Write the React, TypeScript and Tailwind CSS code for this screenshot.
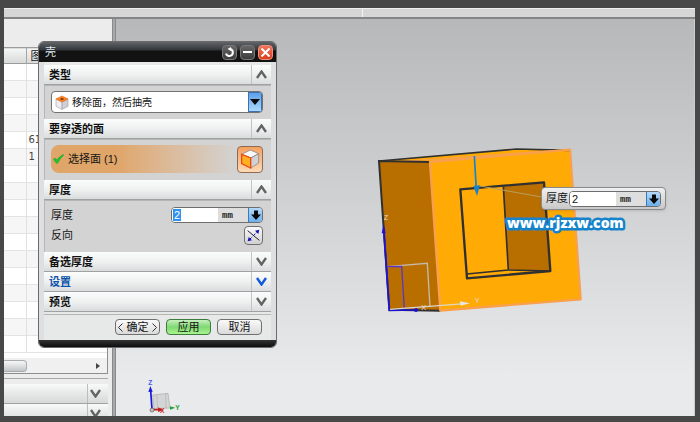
import React, { useState } from 'react';
import clsx from 'clsx';

const fontStack = "font-['Liberation_Sans','Noto_Sans_CJK_SC',sans-serif]";

const rows = ['', '', '', '', '61', '1', '', '', '', '', '', '', '', '', '', '', ''];

const Chevron: React.FC<{ open?: boolean; color?: string }> = ({ open, color = '#646464' }) => (
  <svg width="11" height="9" viewBox="0 0 11 9" fill="none" stroke={color} strokeWidth="2.4">
    {open ? <path d="M1 8 L5.5 1.5 L10 8" /> : <path d="M1 1 L5.5 7.5 L10 1" />}
  </svg>
);

const DownArrow = () => (
  <svg width="10" height="10" viewBox="0 0 10 10" fill="#0a0a0a">
    <path d="M3 0.5H7V4.5H10L5 10L0 4.5H3Z" />
  </svg>
);

interface SectionProps {
  title: string;
  defaultOpen?: boolean;
  highlight?: boolean;
  children?: React.ReactNode;
}

const Section: React.FC<SectionProps> = ({ title, defaultOpen = false, highlight = false, children }) => {
  const [open, setOpen] = useState(defaultOpen);

  return (
    <section>
      <button
        type="button"
        aria-expanded={open}
        onClick={() => setOpen(!open)}
        className="flex h-5 w-full items-stretch justify-between border-b border-[#a0a2a2] bg-linear-to-b from-[#fbfcfc] via-[#eff1f1] to-[#dadddd] text-left"
      >
        <span
          className={clsx(
            'pl-[5px] text-[11px] leading-5 font-bold',
            highlight ? 'text-[#0c52a8]' : 'text-[#111111]'
          )}
        >
          {title}
        </span>
        <span className="flex w-5 items-center justify-center border-l border-[#c2c4c4]">
          <Chevron open={open} color={highlight ? '#1259e0' : undefined} />
        </span>
      </button>
      {open && children && (
        <div className="border-t border-l border-[#b6b6b6] bg-[#d3d3d3]">{children}</div>
      )}
    </section>
  );
};

interface ThicknessFieldProps {
  id: string;
  value: string;
  onChange: (value: string) => void;
  selected?: boolean;
}

const ThicknessField: React.FC<ThicknessFieldProps> = ({ id, value, onChange, selected }) => (
  <div className="flex h-4 w-[92px] items-stretch overflow-hidden rounded-sm border border-[#6e6e6e] bg-[#dedede]">
    <div className="flex w-[46px] items-center bg-white pl-px">
      <input
        id={id}
        value={value}
        onChange={(e) => onChange(e.target.value)}
        className={clsx(
          'h-3 p-0 text-[11px] leading-3 outline-none',
          selected ? 'w-2 bg-[#2f93ee] pl-px text-white' : 'w-9 pl-px text-[#111111]'
        )}
      />
    </div>
    <span className="flex-1 pl-1 font-['Liberation_Mono',monospace] text-[9px] leading-4 font-bold text-[#222222]">
      mm
    </span>
    <button
      type="button"
      aria-label="选项"
      className="flex w-[14px] items-center justify-center border-l border-[#3f78b8] bg-linear-to-b from-[#b5d8f8] to-[#6bb0ee]"
    >
      <DownArrow />
    </button>
  </div>
);

const ModelTree = () => (
  <aside className="flex w-[108px] shrink-0 flex-col bg-[#ececec]">
    <div className="h-7 shrink-0" />
    <div className="mr-1 min-h-0 flex-1 overflow-hidden border-r border-[#8e8e8e] bg-white">
      <table className="w-full table-fixed border-collapse text-[10px] leading-4 text-[#444444]">
        <thead>
          <tr className="h-4 border-y border-[#9b9b9b] bg-linear-to-b from-[#f4f5f5] to-[#d9dbdb]">
            <th className="w-[22px] border-r border-[#a4a4a4] p-0" />
            <th className="p-0 pl-1 text-left text-[11px] leading-[14px] font-normal text-[#111111]">图</th>
          </tr>
        </thead>
        <tbody>
          {rows.map((value, i) => (
            <tr key={i} className="h-[17px] border-b border-[#e4e4e4] even:bg-[#f6f6f6]">
              <td className="border-r border-[#e0e0e0] p-0" />
              <td className="p-0 pl-[2px] font-['DejaVu_Sans',sans-serif]">{value}</td>
            </tr>
          ))}
        </tbody>
      </table>
    </div>
    <div className="mr-1 flex h-4 shrink-0 items-center justify-between border-r border-b border-[#8e8e8e] bg-[#f0f0f0]">
      <div className="h-3 w-[23px] rounded-r-sm border border-l-0 border-[#a9abad] bg-linear-to-b from-[#f6f7f8] to-[#c3c6c9]" />
      <svg width="4" height="6" viewBox="0 0 4 6" className="mr-[7px]" fill="#444444">
        <path d="M0 0 L4 3 L0 6Z" />
      </svg>
    </div>
    <div className="mr-1 mt-1 mb-[5px] h-px shrink-0 bg-[#a9a9a9]" />
    <div className="mr-1 h-8 shrink-0 overflow-hidden">
      {['依附性', '细节'].map((name) => (
        <button
          key={name}
          type="button"
          aria-label={name}
          className="flex h-5 w-full items-stretch justify-end border-b border-[#a0a2a2] bg-linear-to-b from-[#f8f9f9] to-[#d6d9d9] pr-px"
        >
          <span className="flex w-5 items-center justify-center border-l border-[#bcbebe] pr-1">
            <Chevron />
          </span>
        </button>
      ))}
    </div>
  </aside>
);

const SolidModel = () => (
  <svg width="220" height="180" viewBox="0 0 660 540" className="absolute top-[121px] left-[254px]">
    {/* outer faces */}
    <path d="M27 63 L440 27 L600 29 L180 66Z" fill="#ffaa05" />
    <path d="M27 63 L180 66 L211 512 L58 509Z" fill="#b96e00" />
    <path d="M180 66 L600 29 L632 478 L211 512Z" fill="#ffaa05" />
    <path d="M27 63 L440 27 L600 31" fill="none" stroke="#303030" strokeWidth="5" />
    <path d="M100 64 L600 29" stroke="#f7a04e" strokeWidth="4" />
    <path d="M180 66 L27 63 L58 509 L211 512" fill="none" stroke="#303030" strokeWidth="6" />
    <path d="M180 66 L600 29 L632 478 L211 512Z" fill="none" stroke="#f9a04e" strokeWidth="7" strokeLinejoin="round" />

    {/* pocket */}
    <path d="M400 139 L522 128 L541 393 L415 390Z" fill="#b96e00" />
    <path d="M400 139 L415 390 L541 393 M415 390 L291 402" fill="none" stroke="#303030" strokeWidth="5" />
    <path d="M271 148 L522 127 L541 393 L291 415Z" fill="none" stroke="#303030" strokeWidth="7" strokeLinejoin="round" />

    {/* direction handle */}
    <path d="M330 138 L520 172" stroke="#b8a060" strokeWidth="3" />
    <path d="M313 48 L319 150" stroke="#1484d0" strokeWidth="5" />
    <path d="M310 138 L330 136 L321 168Z" fill="#1484d0" />

    {/* datum frame */}
    <path d="M52 380 L172 370 L180 500" fill="none" stroke="#c5b9a8" strokeWidth="4" />
    <path d="M58 509 L41 265 M52 380 L95 379 L103 508" fill="none" stroke="#5a35c8" strokeWidth="4" />
    <path d="M41 265 L58 511 L138 510" fill="none" stroke="#1b12cf" strokeWidth="5" />
    <path d="M35 280 L41 252 L47 280Z" fill="#1b12cf" />
    <circle cx="138" cy="510" r="6" fill="#1b12cf" />
    <path d="M60 508 L285 491" stroke="#ddd6cc" strokeWidth="4" />
    <path d="M270 484 L300 490 L272 497Z" fill="#e6e6e6" />
    <g className="font-['Liberation_Sans',sans-serif] text-[22px]" fill="#dedede">
      <text x="41" y="239">Z</text>
      <text x="154" y="509">X</text>
      <text x="314" y="488">Y</text>
    </g>
  </svg>
);

const ViewTriad = () => (
  <svg width="40" height="40" viewBox="0 0 120 120" className="absolute bottom-0 left-[24px]">
    <path d="M38 57 L84 52 L90 96 L42 98Z" fill="#d4d5d5" stroke="#aaaaaa" strokeWidth="2" />
    <path d="M50 56 L53 97 M77 53 L78 96" stroke="#b2b2b2" strokeWidth="2" />
    <path d="M36 100 L32 44" stroke="#1717e0" strokeWidth="5" />
    <path d="M25 48 L31 30 L38 47Z" fill="#1717e0" />
    <path d="M36 101 L60 101" stroke="#c51d1d" strokeWidth="5" />
    <path d="M54 94 L70 102 L54 108Z" fill="#c51d1d" />
    <path d="M90 91 L106 95 L90 101Z" fill="#21a038" />
    <circle cx="36" cy="102" r="6" fill="#c4c4c4" stroke="#555555" strokeWidth="2" />
    <g className="font-['Liberation_Sans',sans-serif] text-[20px] font-bold">
      <text x="25" y="28" fill="#4257ee">Z</text>
      <text x="60" y="112" fill="#cf2828">X</text>
      <text x="106" y="102" fill="#21a038">Y</text>
    </g>
  </svg>
);

const ShellDialog: React.FC<{ value: string; onChange: (value: string) => void }> = ({ value, onChange }) => (
  <div
    role="dialog"
    aria-label="壳"
    className="absolute top-[33px] left-[34px] w-[239px] overflow-hidden rounded-md border border-[#6b6b6b] bg-[#e7e8e8] text-[11px] text-[#151515]"
  >
    <header className="flex h-5 items-center justify-between bg-linear-to-b from-[#626568] from-0% via-[#33363a] via-40% to-[#121212] to-45% pr-[3px] pl-[6px]">
      <h1 className="text-[11px] leading-5 text-[#dce6ee]">壳</h1>
      <div className="flex gap-[3px]">
        <button type="button" aria-label="重置" className="flex size-[15px] items-center justify-center rounded-sm border border-[#777777] bg-linear-to-b from-[#666666] to-[#3d3d3d]">
          <svg width="11" height="11" viewBox="0 0 11 11" fill="none" stroke="#ffffff" strokeWidth="2">
            <path d="M6 2 A3.5 3.5 0 1 1 2 6.5" />
            <path d="M7 0 L3.5 2 L7 4Z" fill="#ffffff" stroke="none" />
          </svg>
        </button>
        <button type="button" aria-label="最小化" className="flex size-[15px] items-center justify-center rounded-sm border border-[#777777] bg-linear-to-b from-[#666666] to-[#3d3d3d]">
          <span className="h-[2px] w-[9px] bg-white" />
        </button>
        <button type="button" aria-label="关闭" className="flex size-[15px] items-center justify-center rounded-sm border border-[#f08e78] bg-linear-to-b from-[#f0755d] to-[#d93a1c]">
          <svg width="9" height="9" viewBox="0 0 9 9" stroke="#ffffff" strokeWidth="2">
            <path d="M0.5 0.5 L8.5 8.5 M8.5 0.5 L0.5 8.5" />
          </svg>
        </button>
      </div>
    </header>

    <div className="border-x-[5px] border-[#dedfe0] pt-[3px]">
      <Section title="类型" defaultOpen>
        <div className="pt-[5px] pr-2 pb-[6px] pl-[6px]">
          <div className="relative flex h-[22px] items-stretch overflow-hidden rounded-sm border border-[#727272] bg-white">
            <svg width="14" height="15" viewBox="0 0 42 45" className="ml-[3px] shrink-0 self-center">
              <path d="M3 12 L21 21 V43 L3 34Z" fill="#eeeef2" stroke="#a8a8b0" strokeWidth="2" />
              <path d="M39 12 L21 21 V43 L39 34Z" fill="#cfcfd8" stroke="#a0a0a8" strokeWidth="2" />
              <path d="M3 12 L21 3 L39 12 L21 21Z" fill="#f98a28" stroke="#ee6614" strokeWidth="2" />
              <path d="M14 12 L21 8 L28 12 L21 16Z" fill="#8a3b0c" />
            </svg>
            <select aria-label="类型" className="min-w-0 flex-1 appearance-none bg-transparent pl-[3px] text-[10px] outline-none">
              <option>移除面，然后抽壳</option>
              <option>对所有面抽壳</option>
            </select>
            <span className="pointer-events-none flex w-[14px] items-center justify-center border border-[#3f70b4] bg-linear-to-b from-[#5c9fea] via-[#86bcf0] to-[#a9dafb]">
              <svg width="10" height="7" viewBox="0 0 10 7" fill="#0a0a0a">
                <path d="M0 0H10L5 6Z" />
              </svg>
            </span>
          </div>
        </div>
      </Section>

      <Section title="要穿透的面" defaultOpen>
        <div className="flex items-center justify-between pt-[5px] pr-2 pb-[7px] pl-[6px]">
          <div className="flex h-7 flex-1 items-center rounded-lg bg-linear-to-r from-[#e0a568] from-35% to-[#d3d3d3] pl-[2px]">
            <svg width="11" height="10" viewBox="0 0 33 30" fill="#1fc52e" stroke="#138a20" strokeWidth="1">
              <path d="M1 16 L7 12 L12 18 Q20 6 31 1 L32 4 Q21 14 14 28 L10 28Z" />
            </svg>
            <span className="pl-1 text-[11px] leading-4">选择面 (1)</span>
          </div>
          <button
            type="button"
            aria-label="选择面"
            className="flex h-[27px] w-[26px] items-center justify-center rounded-sm border border-[#8e6b55] bg-linear-to-b from-[#f5a15f] to-[#fcd9b5]"
          >
            <svg width="20" height="20" viewBox="0 0 60 60">
              <path d="M5 16 L31 3 L56 14 L32 27Z" fill="#fafafa" stroke="#777777" strokeWidth="2" />
              <path d="M56 14 L32 27 V57 L56 42Z" fill="#d2d2d6" stroke="#777777" strokeWidth="2" />
              <path d="M5 16 L32 27 V57 L5 44Z" fill="#ffb020" stroke="#ee4a10" strokeWidth="4" />
            </svg>
          </button>
        </div>
      </Section>

      <Section title="厚度" defaultOpen>
        <div className="pt-1 pr-2 pb-[7px] pl-[6px]">
          <div className="flex h-5 items-center justify-between">
            <label htmlFor="shell-thickness">厚度</label>
            <ThicknessField id="shell-thickness" value={value} onChange={onChange} selected />
          </div>
          <div className="flex h-5 items-center justify-between">
            <label htmlFor="shell-reverse">反向</label>
            <button
              id="shell-reverse"
              type="button"
              className="flex size-[19px] items-center justify-center rounded-sm border border-[#707070] bg-linear-to-b from-[#fafafa] to-[#d0d0d0]"
            >
              <svg width="13" height="13" viewBox="0 0 39 39">
                <path d="M2 5 L37 34" stroke="#222222" strokeWidth="3" />
                <path d="M6 33 L33 6" stroke="#1414b8" strokeWidth="3" strokeDasharray="11 5" />
                <path d="M37 2 L34 15 L24 5Z M2 37 L5 24 L15 34Z" fill="#1414b8" />
              </svg>
            </button>
          </div>
        </div>
      </Section>

      <Section title="备选厚度" />
      <Section title="设置" highlight />
      <Section title="预览" />

      <div className="mt-[2px] flex justify-end gap-[6px] border-t border-[#b5b5b5] px-[9px] pt-1 pb-[5px]">
        <button type="button" className="flex h-4 w-[45px] items-center justify-between rounded-sm border border-[#707070] bg-linear-to-b from-[#fafafa] to-[#dadada] px-[2px] leading-[14px]">
          <svg width="5" height="9" viewBox="0 0 5 9" fill="none" stroke="#333333">
            <path d="M4.5 0.5 L0.5 4.5 L4.5 8.5" />
          </svg>
          确定
          <svg width="5" height="9" viewBox="0 0 5 9" fill="none" stroke="#333333">
            <path d="M0.5 0.5 L4.5 4.5 L0.5 8.5" />
          </svg>
        </button>
        <button type="button" className="h-4 w-[45px] rounded-sm border border-[#3d7a3d] bg-linear-to-b from-[#c6f0bd] via-[#7fd873] to-[#a9f58f] leading-[14px]">
          应用
        </button>
        <button type="button" className="h-4 w-[45px] rounded-sm border border-[#707070] bg-linear-to-b from-[#fafafa] to-[#dadada] leading-[14px]">
          取消
        </button>
      </div>
    </div>
    <div className="h-[7px] bg-linear-to-b from-[#333333] to-[#0e0e0e]" />
  </div>
);

const App: React.FC = () => {
  const [thickness, setThickness] = useState('2');

  return (
    <div className={clsx('h-screen bg-[#484848] pt-2 pr-[5px] pb-[6px] pl-1', fontStack)}>
      <div className="relative flex h-full flex-col overflow-hidden">
        <div className="flex h-[11px] shrink-0 border-t border-b-2 border-t-[#f0f0f0] border-b-[#858585] bg-[#d6d6d6]">
          <div className="w-[52%] border-r border-[#f4f4f4]" />
        </div>

        <div className="flex min-h-0 flex-1">
          <ModelTree />
          <div className="w-1 shrink-0 border-x border-[#8a8a8a] bg-[#a8a8a8]" />

          <main className="relative min-w-0 flex-1 overflow-hidden border-r border-[#cccccc] bg-linear-to-b from-[#b7b8b9] to-[#e9eaec] to-90%">
            <SolidModel />
            <ViewTriad />
            <div className="absolute top-[168px] left-[425px] flex h-[23px] items-center gap-px rounded-sm border border-[#8a8a8a] bg-linear-to-b from-[#f1f1f1] to-[#c8c8c8] pr-1 pl-1 shadow-sm">
              <label htmlFor="canvas-thickness" className="text-[11px] text-[#151515]">厚度</label>
              <ThicknessField id="canvas-thickness" value={thickness} onChange={setThickness} />
            </div>
            <svg width="130" height="24" viewBox="0 0 130 24" className="absolute top-[193px] left-[384px]">
              <text
                x="7"
                y="16"
                className="font-['Open_Sans','Noto_Sans',sans-serif] text-[14px] font-extrabold"
                fill="#ffffff"
                stroke="#1483cc"
                strokeWidth="5"
                strokeLinejoin="round"
                paintOrder="stroke"
              >
                www.rjzxw.com
              </text>
            </svg>
          </main>
        </div>

        <ShellDialog value={thickness} onChange={setThickness} />
      </div>
    </div>
  );
};

export default App;
